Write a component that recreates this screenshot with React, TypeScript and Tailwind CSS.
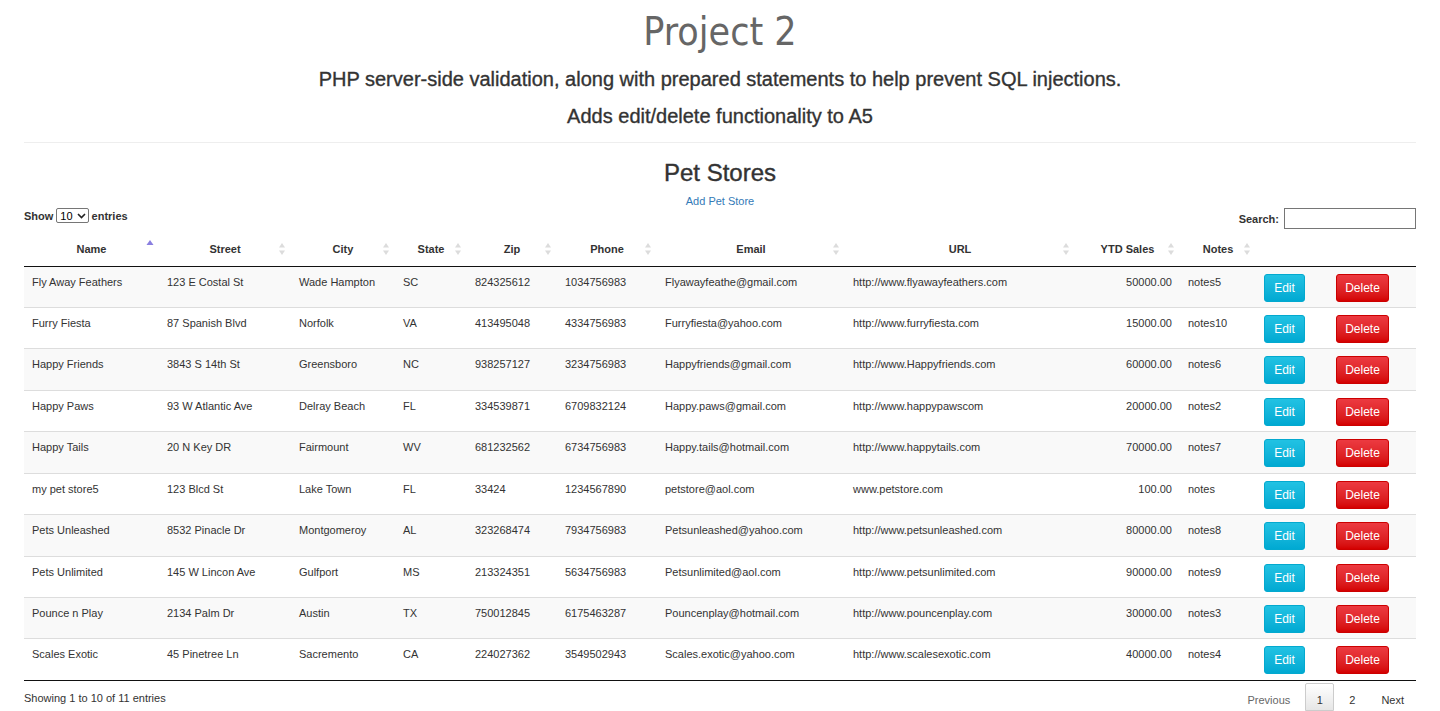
import React from "react";

const rows = [
  ["Fly Away Feathers", "123 E Costal St", "Wade Hampton", "SC", "824325612", "1034756983", "Flyawayfeathe@gmail.com", "http://www.flyawayfeathers.com", "50000.00", "notes5"],
  ["Furry Fiesta", "87 Spanish Blvd", "Norfolk", "VA", "413495048", "4334756983", "Furryfiesta@yahoo.com", "http://www.furryfiesta.com", "15000.00", "notes10"],
  ["Happy Friends", "3843 S 14th St", "Greensboro", "NC", "938257127", "3234756983", "Happyfriends@gmail.com", "http://www.Happyfriends.com", "60000.00", "notes6"],
  ["Happy Paws", "93 W Atlantic Ave", "Delray Beach", "FL", "334539871", "6709832124", "Happy.paws@gmail.com", "http://www.happypawscom", "20000.00", "notes2"],
  ["Happy Tails", "20 N Key DR", "Fairmount", "WV", "681232562", "6734756983", "Happy.tails@hotmail.com", "http://www.happytails.com", "70000.00", "notes7"],
  ["my pet store5", "123 Blcd St", "Lake Town", "FL", "33424", "1234567890", "petstore@aol.com", "www.petstore.com", "100.00", "notes"],
  ["Pets Unleashed", "8532 Pinacle Dr", "Montgomeroy", "AL", "323268474", "7934756983", "Petsunleashed@yahoo.com", "http://www.petsunleashed.com", "80000.00", "notes8"],
  ["Pets Unlimited", "145 W Lincon Ave", "Gulfport", "MS", "213324351", "5634756983", "Petsunlimited@aol.com", "http://www.petsunlimited.com", "90000.00", "notes9"],
  ["Pounce n Play", "2134 Palm Dr", "Austin", "TX", "750012845", "6175463287", "Pouncenplay@hotmail.com", "http://www.pouncenplay.com", "30000.00", "notes3"],
  ["Scales Exotic", "45 Pinetree Ln", "Sacremento", "CA", "224027362", "3549502943", "Scales.exotic@yahoo.com", "http://www.scalesexotic.com", "40000.00", "notes4"],
];

const cols = [
  { label: "Name", w: 135, active: true },
  { label: "Street", w: 132 },
  { label: "City", w: 104 },
  { label: "State", w: 72 },
  { label: "Zip", w: 90 },
  { label: "Phone", w: 100 },
  { label: "Email", w: 188 },
  { label: "URL", w: 230 },
  { label: "YTD Sales", w: 105 },
  { label: "Notes", w: 76 },
  { label: "", w: 72 },
  { label: "", w: 88 },
];

function SortIcon({ active }: { active?: boolean }) {
  if (active) {
    return (
      <svg width="8" height="12" viewBox="0 0 8 12" className="absolute right-[5px] top-[6px]">
        <polygon points="4,2 7.5,7 0.5,7" fill="#8a7fe0" />
      </svg>
    );
  }
  return (
    <svg width="8" height="14" viewBox="0 0 8 14" className="absolute right-[5px] top-[10px]">
      <polygon points="4,1 7,5.5 1,5.5" fill="#dcdcdc" />
      <polygon points="4,13 7,8.5 1,8.5" fill="#dcdcdc" />
    </svg>
  );
}

export default function App() {
  return (
    <div className="bg-white min-h-[711px] px-[24px] text-[#333]" style={{ fontFamily: '"Liberation Sans", Arial, sans-serif' }}>
      <h1
        className="text-center text-[#666] text-[39px] leading-[44px] pt-[10px]"
        style={{ fontFamily: '"DejaVu Sans Condensed", "DejaVu Sans", Verdana, sans-serif' }}
      >
        Project 2
      </h1>
      <h4 className="text-center text-[20px] leading-[22px] mt-[14px] text-[#333] [-webkit-text-stroke:0.35px_#333]">
        PHP server-side validation, along with prepared statements to help prevent SQL injections.
      </h4>
      <h4 className="text-center text-[20px] leading-[22px] mt-[15px] text-[#333] [-webkit-text-stroke:0.35px_#333]">
        Adds edit/delete functionality to A5
      </h4>
      <hr className="mt-[15px] border-0 border-t border-[#eee]" />
      <h2 className="text-center text-[24px] leading-[28px] mt-[16px] text-[#333] [-webkit-text-stroke:0.4px_#333]">Pet Stores</h2>
      <div className="text-center text-[11px] leading-[14px] mt-[7px]">
        <a className="text-[#337ab7]">Add Pet Store</a>
      </div>
      <div className="flex justify-between items-end mt-[-1px] h-[22px]">
        <div className="text-[11px] font-bold flex items-center gap-[3px] mb-[5px]">
          <span>Show</span>
          <span className="inline-flex items-center border border-[#767676] rounded-[2px] h-[15px] pl-[3px] pr-[2px] gap-[4px] font-normal text-[11px] text-black">
            10
            <svg width="9" height="6" viewBox="0 0 9 6"><path d="M1 1 L4.5 4.5 L8 1" stroke="#222" strokeWidth="1.6" fill="none" /></svg>
          </span>
          <span>entries</span>
        </div>
        <div className="text-[11px] font-bold flex items-center gap-[5px]">
          <span className="mt-[1px]">Search:</span>
          <div className="w-[132px] h-[21px] border border-[#767676]" />
        </div>
      </div>
      <table className="w-full border-collapse text-[11px] mt-[3px]" style={{ tableLayout: "fixed" }}>
        <colgroup>
          {cols.map((c, i) => (
            <col key={i} style={{ width: c.w }} />
          ))}
        </colgroup>
        <thead>
          <tr className="h-[34px] border-b border-[#111]">
            {cols.map((c, i) => (
              <th key={i} className="relative font-bold text-center px-[18px] text-[11px] leading-[14px] whitespace-nowrap">
                {c.label}
                {c.label && <SortIcon active={c.active} />}
              </th>
            ))}
          </tr>
        </thead>
        <tbody>
          {rows.map((r, ri) => (
            <tr key={ri} className={`${ri % 2 === 0 ? "bg-[#f9f9f9]" : "bg-white"} ${ri > 0 ? "border-t border-[#ddd]" : ""}`}>
              {r.map((v, ci) => (
                <td
                  key={ci}
                  className={`h-[41.44px] align-top pt-[9px] px-[8px] leading-[13px] whitespace-nowrap ${ci === 8 ? "text-right" : ""}`}
                >
                  {v}
                </td>
              ))}
              <td className="align-top pt-[7px] px-[8px]">
                <button className="h-[28px] w-[41px] rounded-[3px] text-white text-[12px] border border-[#03a9cf] bg-gradient-to-b from-[#21c2e3] to-[#00a9d2]">
                  Edit
                </button>
              </td>
              <td className="align-top pt-[7px] px-[8px]">
                <button className="h-[28px] w-[53px] rounded-[3px] text-white text-[12px] border border-[#cc0000] bg-gradient-to-b from-[#ec3a41] to-[#d40000]">
                  Delete
                </button>
              </td>
            </tr>
          ))}
        </tbody>
      </table>
      <div className="border-t border-[#111] flex justify-between items-start">
        <div className="text-[11px] pt-[9px]">Showing 1 to 10 of 11 entries</div>
        <div className="flex items-start text-[11px] pt-[2px] mr-[12px]">
          <span className="pr-[15px] pt-[9px] text-[#666]">Previous</span>
          <span className="w-[29px] h-[28px] border border-[#ccc] rounded-t-[2px] flex justify-center pt-[8px] bg-gradient-to-b from-white to-[#e6e6e6]">1</span>
          <span className="pl-[15px] pr-[26px] pt-[9px]">2</span>
          <span className="pt-[9px]">Next</span>
        </div>
      </div>
    </div>
  );
}
